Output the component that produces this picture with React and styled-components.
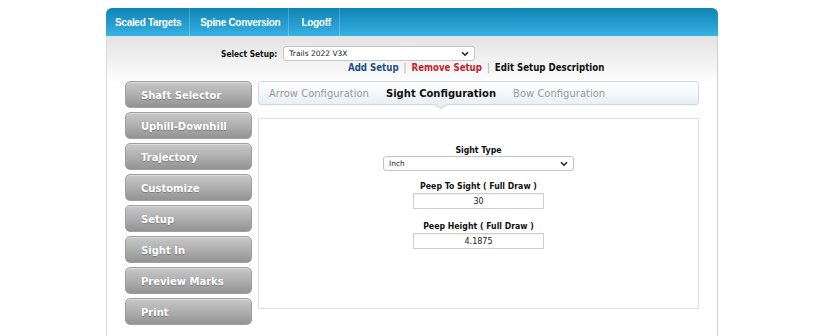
import React from 'react';
import styled, { createGlobalStyle } from 'styled-components';

const GlobalStyle = createGlobalStyle`
  html, body {
    margin: 0;
    padding: 0;
    background: #ffffff;
    font-family: "DejaVu Sans", Verdana, sans-serif;
  }
`;

const Page = styled.div`
  width: 820px;
  height: 336px;
  overflow: hidden;
`;

const Wrapper = styled.div`
  width: 610px;
  margin: 8px 0 0 106px;
  border-left: 1px solid #dcdcdc;
  border-right: 1px solid #d0d0d0;
  border-radius: 6px 6px 0 0;
  min-height: 340px;
  background: linear-gradient(to bottom, #e3e3e3 0px, #ffffff 48px, #ffffff 100%);
  background-position: 0 28px;
  background-repeat: no-repeat;
`;

const TopBar = styled.div`
  height: 28px;
  display: flex;
  align-items: stretch;
  border-radius: 6px 6px 0 0;
  background: linear-gradient(to bottom, #0f84b4 0%, #2aa3d4 70%, #3ab3e2 100%);
  margin: 0 -1px;
`;

const NavItem = styled.a`
  display: flex;
  align-items: center;
  padding: 0 ${p => p.pr || 8}px 0 ${p => p.pl || 9}px;
  color: #ffffff;
  font-family: "Liberation Sans", Arial, sans-serif;
  font-weight: bold;
  font-size: 10px;
  letter-spacing: -0.3px;
  text-decoration: none;
  border-right: 1px solid rgba(255, 255, 255, 0.22);
`;

const SetupArea = styled.div`
  padding: 10px 0 0 114px;
  height: 35px;
`;

const SetupRow = styled.div`
  display: flex;
  align-items: center;
  gap: 6px;
`;

const SetupLabel = styled.label`
  font-family: "DejaVu Sans Condensed", "DejaVu Sans", sans-serif;
  font-size: 8.3px;
  font-weight: bold;
  color: #111;
`;

const SelectBox = styled.div`
  position: relative;
  box-sizing: border-box;
  width: ${p => p.width}px;
  height: ${p => p.height}px;
  background: #ffffff;
  border: 1px solid #c4c4c4;
  border-radius: 3px;
  font-size: 7.5px;
  color: #222;
  display: flex;
  align-items: center;
  padding-left: 5px;

  svg {
    position: absolute;
    right: 5px;
    top: 50%;
    transform: translateY(-50%);
  }
`;

const LinksRow = styled.div`
  margin: 1px 0 0 127px;
  font-family: "DejaVu Sans Condensed", "DejaVu Sans", sans-serif;
  font-size: 9.6px;
  font-weight: bold;
  display: flex;
  gap: 5px;
  white-space: nowrap;
`;

const LinkText = styled.span`
  color: ${p => p.color};
`;

const Pipe = styled.span`
  color: #a8a8a8;
  font-weight: normal;
`;

const Body = styled.div`
  display: flex;
  gap: 6px;
  padding: 0 18px 0 18px;
`;

const Sidebar = styled.div`
  display: flex;
  flex-direction: column;
  gap: 4px;
  width: 127px;
  flex-shrink: 0;
`;

const SideButton = styled.div`
  box-sizing: border-box;
  height: 27px;
  border-radius: 5px;
  border: 1px solid #a0a0a0;
  background: linear-gradient(to bottom, #c8c8c8 0%, #afafaf 50%, #939393 100%);
  box-shadow: inset 0 1px 0 rgba(255, 255, 255, 0.35);
  color: #ffffff;
  font-size: 10px;
  font-weight: bold;
  display: flex;
  align-items: center;
  padding: 2px 0 0 15px;
  text-shadow: 0 1px 1px rgba(0, 0, 0, 0.25);
`;

const MainColumn = styled.div`
  flex: 1;
  display: flex;
  flex-direction: column;
  gap: 13px;
`;

const TabBar = styled.div`
  position: relative;
  box-sizing: border-box;
  height: 24px;
  border: 1px solid #cfd9e3;
  border-radius: 3px;
  background: linear-gradient(to bottom, #ffffff 0%, #f4f7fa 50%, #e9eff5 100%);
  box-shadow: 0 1px 1px rgba(0, 0, 0, 0.05);
  display: flex;
  align-items: center;
  padding-left: 10px;
  gap: 17px;
`;

const Tab = styled.span`
  position: relative;
  font-size: 10px;
  font-weight: ${p => (p.active ? 'bold' : 'normal')};
  color: ${p => (p.active ? '#111111' : '#9a9a9a')};
  white-space: nowrap;
`;

const Pointer = styled.span`
  position: absolute;
  left: 50%;
  top: 16px;
  width: 0;
  height: 0;
  margin-left: -8px;
  border-left: 8px solid transparent;
  border-right: 8px solid transparent;
  border-top: 5px solid #d6dde5;

  &::after {
    content: '';
    position: absolute;
    left: -7px;
    top: -6px;
    border-left: 7px solid transparent;
    border-right: 7px solid transparent;
    border-top: 4px solid #eaeff4;
  }
`;

const Panel = styled.div`
  box-sizing: border-box;
  height: 191px;
  border: 1px solid #e2e2e2;
  display: flex;
  flex-direction: column;
  align-items: center;
  padding-top: 26px;
`;

const FieldLabel = styled.div`
  font-family: "DejaVu Sans Condensed", "DejaVu Sans", sans-serif;
  font-size: 8.7px;
  line-height: 10px;
  font-weight: bold;
  color: #111;
  margin-bottom: ${p => p.mb || 1}px;
  margin-top: ${p => p.mt || 0}px;
`;

const NumberField = styled.div`
  box-sizing: border-box;
  width: 131px;
  height: 16px;
  border: 1px solid #cfcfcf;
  background: #ffffff;
  box-shadow: inset 0 1px 1px rgba(0, 0, 0, 0.06);
  font-size: 8px;
  color: #222;
  display: flex;
  align-items: center;
  justify-content: center;
`;

const Chevron = () => (
  <svg width="8" height="6" viewBox="0 0 8 6">
    <path d="M1 1.2 L4 4.2 L7 1.2" fill="none" stroke="#222" strokeWidth="1.6" />
  </svg>
);

const sideItems = [
  'Shaft Selector',
  'Uphill-Downhill',
  'Trajectory',
  'Customize',
  'Setup',
  'Sight In',
  'Preview Marks',
  'Print',
];

export default function App() {
  return (
    <Page>
      <GlobalStyle />
      <Wrapper>
        <TopBar>
          <NavItem>Scaled Targets</NavItem>
          <NavItem pl={10}>Spine Conversion</NavItem>
          <NavItem pl={12}>Logoff</NavItem>
        </TopBar>
        <SetupArea>
          <SetupRow>
            <SetupLabel>Select Setup:</SetupLabel>
            <SelectBox width={192} height={15}>
              Trails 2022 V3X
              <Chevron />
            </SelectBox>
          </SetupRow>
          <LinksRow>
            <LinkText color="#1e4f86">Add Setup</LinkText>
            <Pipe>|</Pipe>
            <LinkText color="#c0242c">Remove Setup</LinkText>
            <Pipe>|</Pipe>
            <LinkText color="#111111">Edit Setup Description</LinkText>
          </LinksRow>
        </SetupArea>
        <Body>
          <Sidebar>
            {sideItems.map(item => (
              <SideButton key={item}>{item}</SideButton>
            ))}
          </Sidebar>
          <MainColumn>
            <TabBar>
              <Tab>Arrow Configuration</Tab>
              <Tab active>
                Sight Configuration
                <Pointer />
              </Tab>
              <Tab>Bow Configuration</Tab>
            </TabBar>
            <Panel>
              <FieldLabel>Sight Type</FieldLabel>
              <SelectBox width={191} height={15}>
                Inch
                <Chevron />
              </SelectBox>
              <FieldLabel mt={10} mb={2}>Peep To Sight ( Full Draw )</FieldLabel>
              <NumberField>30</NumberField>
              <FieldLabel mt={12} mb={2}>Peep Height ( Full Draw )</FieldLabel>
              <NumberField>4.1875</NumberField>
            </Panel>
          </MainColumn>
        </Body>
      </Wrapper>
    </Page>
  );
}
